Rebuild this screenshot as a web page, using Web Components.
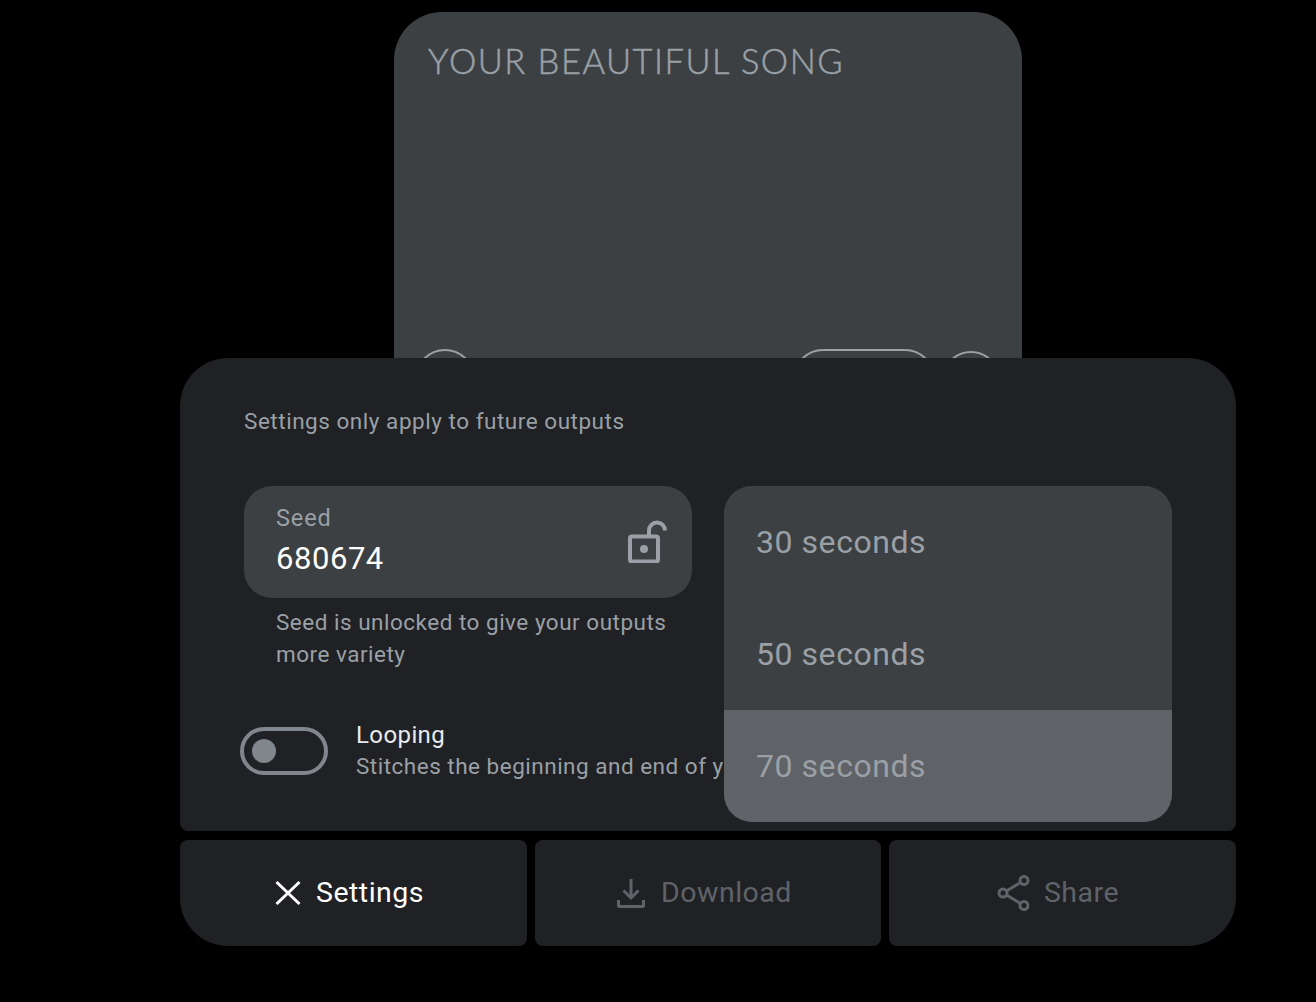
<!DOCTYPE html>
<html lang="en">
<head>
<meta charset="utf-8">
<title>Song settings</title>
<style>
html,body{margin:0;padding:0;background:#000;height:1002px;overflow:hidden;font-family:Roboto,"Liberation Sans",sans-serif;color:#9aa0a6}
</style>
</head>
<body>
<song-screen>
  <song-card title-text="YOUR BEAUTIFUL SONG"></song-card>
  <settings-panel>
    <seed-field slot="left" label="Seed" value="680674" help="Seed is unlocked to give your outputs more variety"></seed-field>
    <duration-menu slot="right">
      <menu-option>30 seconds</menu-option>
      <menu-option>50 seconds</menu-option>
      <menu-option selected>70 seconds</menu-option>
    </duration-menu>
    <toggle-row slot="bottom" label="Looping" desc="Stitches the beginning and end of y"></toggle-row>
  </settings-panel>
  <action-bar>
    <action-button active corner="left" label="Settings">
      <svg slot="icon" width="28" height="28" viewBox="0 0 28 28" fill="none" stroke="currentColor" stroke-width="3"><path d="M2.500 3 25.500 25M25.500 3 2.500 25"/></svg>
    </action-button>
    <action-button label="Download">
      <svg slot="icon" width="32" height="32" viewBox="0 0 32 32" fill="none" stroke="currentColor" stroke-width="3"><path d="M16 2V21M8.500 13.500 16 21l7.500-7.500"/><path d="M3.500 23v5.500a1 1 0 0 0 1 1h23a1 1 0 0 0 1-1V23"/></svg>
    </action-button>
    <action-button corner="right" label="Share">
      <svg slot="icon" width="33" height="38" viewBox="0 0 33 38" fill="none" stroke="currentColor" stroke-width="3"><circle cx="27" cy="6.500" r="4"/><circle cx="6" cy="19" r="4"/><circle cx="27" cy="31.500" r="4"/><path d="M9.500 17 23.500 8.500M9.500 21l14 8.500"/></svg>
    </action-button>
  </action-bar>
</song-screen>
<script>
function def(name, css, html){
  customElements.define(name, class extends HTMLElement{
    constructor(){super();this.attachShadow({mode:'open'});}
    connectedCallback(){
      const a=n=>this.getAttribute(n)||'';
      this.shadowRoot.innerHTML='<style>'+css+'</style>'+(typeof html==='function'?html(a):html);
    }
  });
}
def('song-screen',
 ':host{display:block;width:1056px;margin-left:180px;padding-top:12px}',
 '<slot></slot>');
def('song-card',
 `:host{display:flex;flex-direction:column;box-sizing:border-box;width:628px;height:346px;margin-left:214px;background:#3c4043;border-radius:48px 48px 0 0;overflow:hidden;padding:30px 34px 0}
  .t{font:300 34.500px/38px Lato,sans-serif;letter-spacing:1.500px;color:#9aa0a6;-webkit-text-stroke:.5px #9aa0a6}
  .c{display:flex;margin-top:auto;margin-bottom:-51px;margin-left:-13px;height:60px;align-items:flex-start;flex:none}
  .o{box-sizing:border-box;border:2px solid #9aa0a6;height:60px;flex:none}
  .a{width:60px;border-radius:50%}
  .b{width:142px;border-radius:30px;margin-left:318px;border-width:2.500px}
  .d{width:58px;height:58px;border-radius:50%;margin:2px 0 0 7px}`,
 a=>`<div class="t">${a('title-text')}</div><div class="c"><div class="o a"></div><div class="o b"></div><div class="o d"></div></div>`);
def('settings-panel',
 `:host{display:block;box-sizing:border-box;height:473px;background:#202124;border-radius:48px 48px 8px 8px;padding:0 64px}
  .n{font-size:22.500px;line-height:32px;padding-top:47px;height:128px;box-sizing:border-box;letter-spacing:.53px;color:#9aa0a6}
  .g{display:grid;grid-template-columns:448px 448px;column-gap:32px}
  .r{position:relative}
  .b{margin:56px 0 0 -4px}`,
 `<div class="n">Settings only apply to future outputs</div>
  <div class="g"><div><slot name="left"></slot><div class="b"><slot name="bottom"></slot></div></div><div class="r"><slot name="right"></slot></div></div>`);
def('seed-field',
 `:host{display:block}
  .f{box-sizing:border-box;height:112px;background:#3c4043;border-radius:28px;padding:16px 32px 0;display:flex;justify-content:space-between}
  .l{font-size:23.500px;line-height:32px;color:#9aa0a6;letter-spacing:.9px}
  .v{font-size:31px;line-height:40px;color:#fff;letter-spacing:.55px;margin-top:5px}
  svg{margin:17px -8px 0 0;flex:none}
  .h{margin:8px 16px 0 32px;font-size:22.500px;line-height:32px;letter-spacing:.5px;color:#9aa0a6}`,
 a=>`<div class="f"><div><div class="l">${a('label')}</div><div class="v">${a('value')}</div></div>
  <svg width="40" height="44" viewBox="0 0 40 44" fill="none" stroke="#9aa0a6" stroke-width="4"><rect x="2" y="17.500" width="28" height="25" rx="2"/><path d="M21 16.500v-5a8 8 0 0 1 16 0"/><circle cx="16" cy="30" r="4" fill="#9aa0a6" stroke="none"/></svg></div>
  <div class="h">${a('help')}</div>`);
def('duration-menu',
 `:host{display:block;position:absolute;top:0;left:0;width:448px;border-radius:28px;overflow:hidden;background:#3c4043}`,
 '<slot></slot>');
customElements.define('menu-option', class extends HTMLElement{
  constructor(){super();this.attachShadow({mode:'open'}).innerHTML=
  `<style>:host{display:flex;align-items:center;box-sizing:border-box;height:112px;padding:0 32px;font-size:32px;letter-spacing:.55px;color:#9aa0a6;background:#3c4043}
  :host([selected]){background:#5f6368}</style><slot></slot>`;}
});
def('toggle-row',
 `:host{display:flex;align-items:flex-start;white-space:nowrap}
  .s{box-sizing:border-box;width:88px;height:48px;border:4px solid #80868b;border-radius:24px;display:flex;align-items:center;padding-left:8px;flex:none;margin-top:1px}
  .k{width:24px;height:24px;border-radius:50%;background:#80868b}
  .x{margin-left:28px}
  .l{font-size:24px;line-height:32px;color:#e8eaed;letter-spacing:.4px;margin-top:-7px}
  .d{font-size:22.500px;line-height:32px;letter-spacing:.5px;color:#9aa0a6;margin-top:-1px}`,
 a=>`<div class="s"><div class="k"></div></div><div class="x"><div class="l">${a('label')}</div><div class="d">${a('desc')}</div></div>`);
def('action-bar',
 `:host{display:grid;grid-template-columns:347px 346px 347px;column-gap:8px;margin-top:9px}`,
 '<slot></slot>');
def('action-button',
 `:host{display:flex;align-items:center;justify-content:center;gap:14px;box-sizing:border-box;padding-right:9px;height:106px;background:#202124;border-radius:8px;color:#5f6368;font-size:28.500px;letter-spacing:.5px}
  :host([active]){color:#fff}
  :host([corner=left]){border-radius:8px 8px 8px 48px}
  :host([corner=right]){border-radius:8px 8px 48px 8px}
  ::slotted(svg){flex:none;display:block}
  span{margin-bottom:2px}`,
 a=>`<slot name="icon"></slot><span>${a('label')}</span>`);
</script>
</body>
</html>
